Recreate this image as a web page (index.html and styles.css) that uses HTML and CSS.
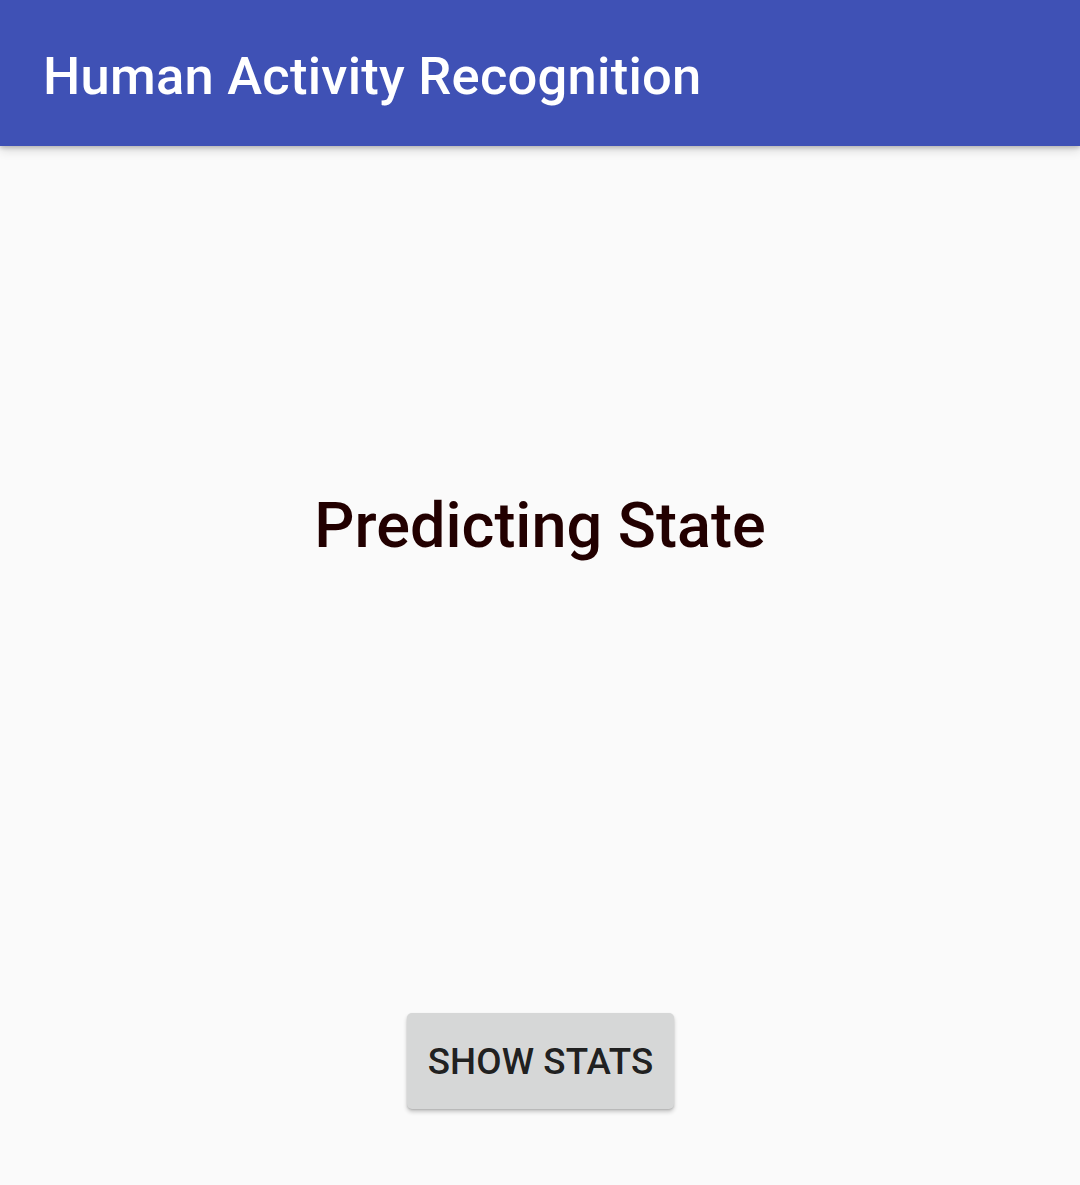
FILE: index.html
```html
<!DOCTYPE html>
<html>
<head>
<meta charset="utf-8">
<link rel="stylesheet" href="styles.css">
</head>
<body>
<header class="toolbar">
  <h1 class="title">Human Activity Recognition</h1>
</header>
<main class="content">
  <p class="state">Predicting State</p>
  <button class="stats-btn">SHOW STATS</button>
</main>
</body>
</html>
```
FILE: styles.css
```css
html, body {
  margin: 0;
  padding: 0;
  height: 100%;
}
body {
  background: #fafafa;
  font-family: Roboto, "Noto Sans", sans-serif;
  overflow: hidden;
}
.toolbar {
  position: relative;
  z-index: 2;
  box-sizing: border-box;
  height: 146px;
  padding: 45px 0 0 43px;
  background: #3f51b5;
  box-shadow: 0 2px 4px rgba(0,0,0,0.18), 0 4px 10px rgba(0,0,0,0.14);
}
.title {
  margin: 0;
  color: #fff;
  font-size: 52.5px;
  line-height: 62px;
  font-weight: 500;
  letter-spacing: 0.25px;
}
.content {
  display: flex;
  flex-direction: column;
  align-items: center;
}
.state {
  margin: 343px 0 0;
  font-size: 63px;
  line-height: 74px;
  font-weight: 500;
  color: #220000;
}
.stats-btn {
  margin-top: 450px;
  margin-left: 1px;
  width: 267px;
  height: 96px;
  padding: 0;
  border: none;
  border-radius: 5px;
  background: #d6d7d7;
  color: rgba(0,0,0,0.87);
  font-family: Roboto, "Noto Sans", sans-serif;
  font-size: 36.75px;
  font-weight: 500;
  letter-spacing: 0.1px;
  box-shadow: 0 3px 4px rgba(0,0,0,0.2), 0 1px 2px rgba(0,0,0,0.14);
}
```
